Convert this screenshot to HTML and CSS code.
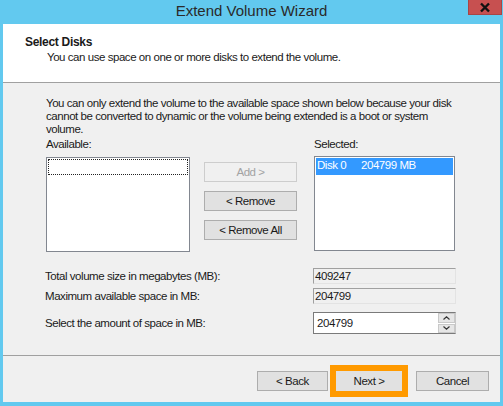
FILE: index.html
```html
<!DOCTYPE html>
<html>
<head>
    <title>Extend Volume Wizard</title>
    <link rel="stylesheet" href="styles.css">
</head>
<body>
    <div class="window">
        <!-- Title bar -->
        <div class="titlebar">
            <span class="title">Extend Volume Wizard</span>
            <div class="close-btn">
                <svg width="14" height="11" viewBox="0 0 14 11">
                    <path d="M3 1.5 L11 9.5 M11 1.5 L3 9.5" stroke="#111" stroke-width="2.4" fill="none"/>
                </svg>
            </div>
        </div>

        <!-- Page header -->
        <div class="header">
            <div class="header-title">Select Disks</div>
            <div class="header-sub">You can use space on one or more disks to extend the volume.</div>
        </div>

        <!-- Page content -->
        <div class="content">
            <p class="intro">You can only extend the volume to the available space shown below because your disk<br>cannot be converted to dynamic or the volume being extended is a boot or system<br>volume.</p>

            <div class="disk-picker">
                <div class="label">Available:</div>
                <div></div>
                <div class="label">Selected:</div>

                <div class="listbox available">
                    <div class="focus-row"></div>
                </div>
                <div class="move-buttons">
                    <button class="btn" disabled>Add &gt;</button>
                    <button class="btn">&lt; Remove</button>
                    <button class="btn">&lt; Remove All</button>
                </div>
                <div class="listbox selected">
                    <div class="item-selected"><span class="disk-name">Disk 0</span>204799 MB</div>
                </div>
            </div>

            <div class="fields">
                <div class="field-row">
                    <span class="field-label">Total volume size in megabytes (MB):</span>
                    <div class="readonly">409247</div>
                </div>
                <div class="field-row">
                    <span class="field-label">Maximum available space in MB:</span>
                    <div class="readonly">204799</div>
                </div>
                <div class="field-row spin-row">
                    <span class="field-label">Select the amount of space in MB:</span>
                    <div class="spin">
                        <span class="spin-value">204799</span>
                        <div class="spin-buttons">
                            <div class="spin-btn">
                                <svg width="7" height="4" viewBox="0 0 7 4"><path d="M0.5 3.5 L3.5 0.8 L6.5 3.5" stroke="#333" stroke-width="1.2" fill="none"/></svg>
                            </div>
                            <div class="spin-btn">
                                <svg width="7" height="4" viewBox="0 0 7 4"><path d="M0.5 0.5 L3.5 3.2 L6.5 0.5" stroke="#333" stroke-width="1.2" fill="none"/></svg>
                            </div>
                        </div>
                    </div>
                </div>
            </div>
        </div>

        <!-- Wizard buttons -->
        <div class="footer">
            <button class="btn nav back">&lt; Back</button>
            <button class="btn nav next">Next &gt;</button>
            <button class="btn nav cancel">Cancel</button>
        </div>
    </div>
</body>
</html>
```

FILE: styles.css
```css
* {
    margin: 0;
    padding: 0;
    box-sizing: border-box;
}

body {
    font-family: 'Liberation Sans', Arial, sans-serif;
    font-size: 11.5px;
    letter-spacing: -0.45px;
    color: #1a1a1a;
    background: #62c9ef;
}

.window {
    width: 503px;
    height: 406px;
    display: flex;
    flex-direction: column;
    background: #62c9ef;
    padding: 0 3px 4px 3px;
}

.titlebar {
    position: relative;
    height: 24px;
    display: flex;
    justify-content: center;
    align-items: center;
}

.title {
    font-size: 15px;
    letter-spacing: 0;
    color: #2a2a2a;
    margin-top: -4px;
}

.close-btn {
    position: absolute;
    top: 0;
    right: -2px;
    width: 34px;
    height: 15px;
    background: #c75050;
    border: 1px solid #a84545;
    border-top: none;
    display: flex;
    justify-content: center;
    align-items: center;
}

.header {
    background: #fff;
    height: 59px;
    border-bottom: 1px solid #a0a0a0;
    padding: 11px 0 0 22px;
    line-height: 14px;
}

.header-title {
    font-weight: bold;
    font-size: 12px;
    letter-spacing: -0.3px;
}

.header-sub {
    padding-left: 22px;
    margin-top: 1px;
}

.content {
    flex: 1;
    background: #f0f0f0;
    padding: 14px 0 0 43px;
}

.intro {
    line-height: 13px;
}

.disk-picker {
    display: grid;
    grid-template-columns: 144px 93px 144px;
    column-gap: 14px;
    margin-top: 1px;
}

.disk-picker .label {
    line-height: 14px;
    margin-bottom: 6px;
}

.disk-picker .label:nth-child(3) {
    margin-left: 3px;
}

.listbox {
    height: 95px;
    background: #fff;
    border: 1px solid #828790;
    padding: 1px;
}

.selected {
    margin-left: 3px;
    margin-top: -1px;
}

.focus-row {
    height: 16px;
    border: 1px dotted #222;
}

.item-selected {
    height: 17px;
    background: #3399ff;
    color: #fff;
    line-height: 15px;
    padding-left: 1px;
}

.disk-name {
    display: inline-block;
    width: 44px;
}

.move-buttons {
    display: flex;
    flex-direction: column;
    gap: 9px;
    padding-top: 5px;
}

.btn {
    font-family: inherit;
    font-size: inherit;
    letter-spacing: inherit;
    color: #1a1a1a;
    height: 20px;
    background: #e1e1e1;
    border: 1px solid #adadad;
}

.btn:disabled {
    background: #f0f0f0;
    border-color: #cdcdcd;
    color: #a3a3a3;
}

.fields {
    margin-top: 16px;
    display: flex;
    flex-direction: column;
    gap: 4px;
}

.field-row {
    display: flex;
    align-items: center;
}

.field-label {
    width: 268px;
    margin-left: -1px;
}

.readonly {
    width: 143px;
    height: 16px;
    line-height: 15px;
    padding-left: 1px;
    border-top: 1px solid #a0a0a0;
    border-left: 1px solid #a0a0a0;
    border-right: 1px solid #e3e3e3;
    border-bottom: 1px solid #e3e3e3;
}

.spin-row {
    margin-top: 4px;
}

.spin {
    width: 143px;
    height: 22px;
    background: #fff;
    border: 1px solid #7a7a7a;
    border-right-color: #c8c8c8;
    display: flex;
    justify-content: space-between;
    align-items: center;
    padding-left: 3px;
}

.spin-buttons {
    display: flex;
    flex-direction: column;
    gap: 1px;
    height: 20px;
    width: 17px;
    background: #fff;
}

.spin-btn {
    flex: 1;
    background: #e6e6e6;
    border: 1px solid #c9c9c9;
    display: flex;
    justify-content: center;
    align-items: center;
}

.footer {
    height: 47px;
    background: #f0f0f0;
    border-top: 1px solid #a0a0a0;
    display: flex;
    justify-content: flex-end;
    align-items: flex-start;
    padding: 15px 11px 0 0;
}

.nav {
    height: 20px;
}

.back {
    width: 71px;
}

.next {
    width: 66px;
    margin-left: 8px;
    border-color: #e1e1e1;
    box-shadow: 0 0 0 6px #ff9a00;
}

.cancel {
    width: 73px;
    margin-left: 14px;
}
```
